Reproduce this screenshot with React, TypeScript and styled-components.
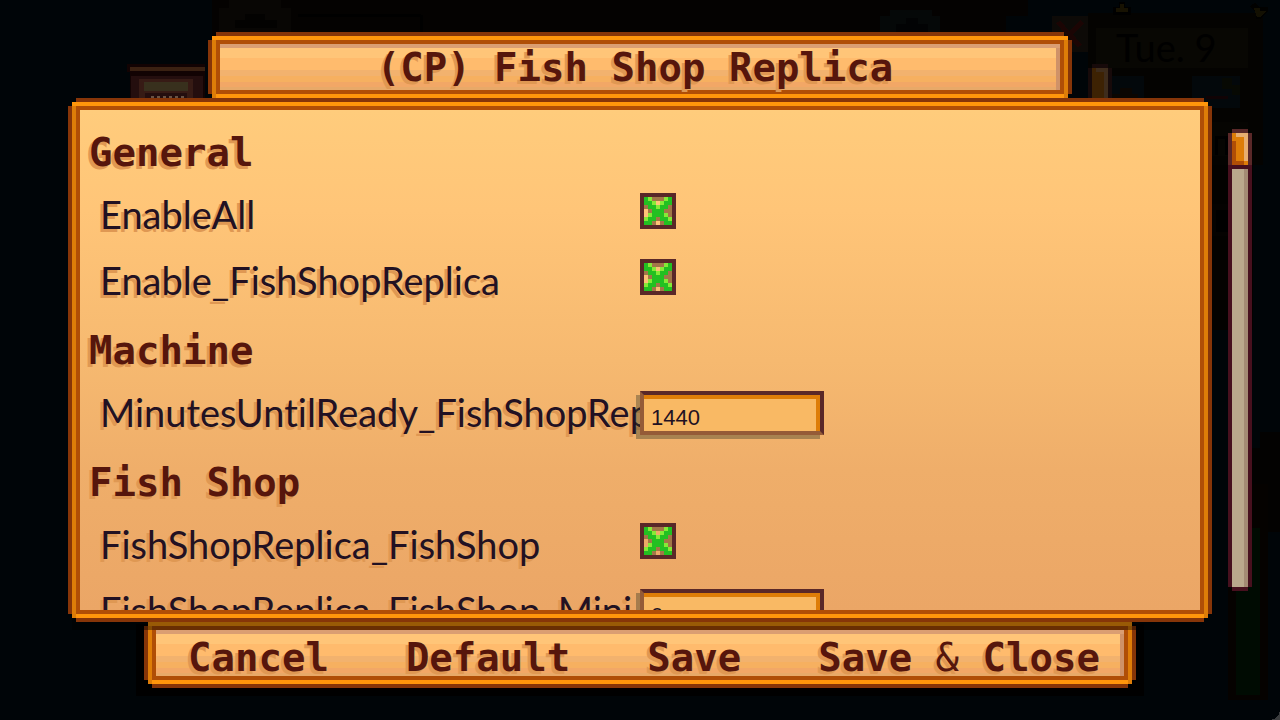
import React, { useState } from "react";
import styled, { createGlobalStyle, css } from "styled-components";

const GlobalStyle = createGlobalStyle`
  * { box-sizing: border-box; }
  body { margin: 0; background: #000508; }
`;

const headingText = css`
  font-family: "DejaVu Sans Mono", monospace;
  font-weight: 700;
  font-size: 39px;
  line-height: 48px;
  color: #56160c;
  text-shadow: -3px 3px 0 #df9853;
  white-space: nowrap;
`;

/* Pixel-art wooden frame: three 4px rings with notched corners. */
const frame = css`
  border: 4px solid #b04e06;
  box-shadow:
    0 -4px 0 #ff960b,
    0 4px 0 #ff960b,
    -4px 0 0 #de7d08,
    4px 0 0 #de7d08,
    -4px -4px 0 #ff960b,
    4px -4px 0 #ff960b,
    -4px 4px 0 #de7d08,
    4px 4px 0 #de7d08,
    0 -8px 0 #863508,
    0 8px 0 #863508,
    -8px 0 0 #863508,
    8px 0 0 #863508,
    -4px 16px 0 rgba(0, 0, 0, 0.4);
`;

const Screen = styled.div`
  position: relative;
  height: 100vh;
  min-height: 480px;
  overflow: hidden;
  display: flex;
  flex-direction: column;
  padding: 40px 0;
  gap: 12px;
`;

const Backdrop = styled.svg`
  position: absolute;
  inset: 0;
  width: 100%;
  height: 100%;
`;

const Plank = styled.div`
  ${frame}
  position: relative;
  height: 54px;
  flex: none;
  background:
    linear-gradient(#da9e72, #da9e72) top / 100% 4px no-repeat,
    linear-gradient(#cf9268, #cf9268) right / 4px 100% no-repeat,
    linear-gradient(#ffc578 14px, #ffbb6d 14px 26px, #f2b26e 26px 32px, #f6b060 32px 38px, #f2a766 38px 43px, #e8a968 43px);
`;

const TitleBar = styled(Plank).attrs({ as: "header" })`
  margin: 0 216px;
  padding-right: 10px;
  display: flex;
  justify-content: center;
`;

const Title = styled.h1`
  ${headingText}
  margin: 0;
`;

const Middle = styled.div`
  position: relative;
  z-index: 1;
  flex: 1;
  min-height: 0;
  display: flex;
  gap: 24px;
  padding: 0 28px 0 76px;
`;

const Panel = styled.main`
  ${frame}
  flex: 1;
  min-width: 0;
  overflow: hidden;
  padding: 17px 0 0;
  background: linear-gradient(#ffcc7c, #ffc578 20%, #f6b970 50%, #efae6a 72%, #eba666);
`;

const SectionHeading = styled.h2`
  ${headingText}
  height: 66px;
  margin: 0;
  padding-left: 9px;
  line-height: 52px;
`;

const Row = styled.div`
  display: grid;
  grid-template-columns: 1fr 1fr;
  height: 66px;
`;

const RowLabel = styled.label`
  min-width: 0;
  overflow: hidden;
  padding-left: 20px;
  font-family: Lato, sans-serif;
  font-size: 38px;
  font-variant-ligatures: none;
  line-height: 42px;
  color: #221122;
  text-shadow: -3px 3px 0 #df9853;
  white-space: nowrap;
`;

const CheckWrap = styled.span`
  display: grid;
  width: 36px;
  height: 36px;
  & > * { grid-area: 1 / 1; }
`;

const CheckInput = styled.input`
  width: 36px;
  height: 36px;
  margin: 0;
  opacity: 0;
  cursor: pointer;
`;

const TextInput = styled.input`
  position: relative;
  width: 184px;
  height: 44px;
  border: 4px solid;
  border-color: #5a2828 #5a2828 #955b37 #955b37;
  border-radius: 0;
  outline: none;
  padding: 10px 8px 0 7px;
  background:
    linear-gradient(#de7d08, #de7d08) top / 100% 4px no-repeat,
    linear-gradient(#de7d08, #de7d08) right / 4px 100% no-repeat,
    #f9b964;
  box-shadow: -4px 4px 0 rgba(60, 60, 40, 0.4);
  font-family: "Liberation Sans", sans-serif;
  font-size: 22px;
  line-height: 24px;
  color: #221122;
`;

const ScrollTrack = styled.div`
  width: 24px;
  margin: 23px 0;
  display: flex;
  flex-direction: column;
`;

const Thumb = styled.svg`
  display: block;
  flex: none;
`;

const Groove = styled.div`
  flex: 1;
  margin: 0 4px 4px;
  background: linear-gradient(90deg, #baa88c 12px, #a38a73 12px);
  box-shadow: -4px 0 0 #47101e, 4px 0 0 #47101e, 0 4px 0 #47101e;
`;

const Actions = styled(Plank).attrs({ as: "footer" })`
  margin: 0 152px;
  padding: 4px 24px 0 32px;
  display: flex;
  align-items: flex-start;
  justify-content: space-between;
`;

const ActionButton = styled.button`
  ${headingText}
  border: 0;
  padding: 0;
  background: none;
  cursor: pointer;
`;

const Thin = styled.span`
  font-weight: 400;
`;

const CHECK_ROWS = ["GLBBBLG", "GGLPLGG", "BGGLGGB", "PBGGGBB", "PLGGGLB", "LGGBGGL", "GGBPBGG"];
const CHECK_COLORS: Record<string, string> = { G: "#23c021", L: "#86ea37", B: "#a27748" };

function CheckArt({ on }: { on: boolean }) {
  return (
    <svg width="36" height="36" viewBox="0 0 9 9" shapeRendering="crispEdges" aria-hidden="true">
      <path d="M0 0h9v9H0zM1 1v7h7V1z" fill="#5a2828" fillRule="evenodd" />
      {on &&
        CHECK_ROWS.flatMap((row, y) =>
          row.split("").map((c, x) =>
            CHECK_COLORS[c] ? (
              <rect key={`${x}-${y}`} x={x + 1} y={y + 1} width="1" height="1" fill={CHECK_COLORS[c]} />
            ) : null
          )
        )}
    </svg>
  );
}

function CheckRow({ name }: { name: string }) {
  const [on, setOn] = useState(true);
  return (
    <Row>
      <RowLabel htmlFor={name}>{name}</RowLabel>
      <CheckWrap>
        <CheckArt on={on} />
        <CheckInput id={name} type="checkbox" checked={on} onChange={(e) => setOn(e.target.checked)} />
      </CheckWrap>
    </Row>
  );
}

function TextRow({ name, value }: { name: string; value: string }) {
  return (
    <Row>
      <RowLabel htmlFor={name}>{name}</RowLabel>
      <TextInput id={name} type="text" defaultValue={value} />
    </Row>
  );
}

function Scene() {
  return (
    <Backdrop viewBox="0 0 1280 720" preserveAspectRatio="xMidYMid slice" shapeRendering="crispEdges" aria-hidden="true">
      <path d="M212 0h816v16h-22v24H212z" fill="#040201" />
      <path d="M219 8h10V0h52v8h10v24h-72z" fill="#080604" />
      <path d="M235 28v-8h10v-6h20v6h12v8z" fill="#030201" />
      <path d="M298 15h123M421 15v17" stroke="#000" strokeWidth="3" />
      <path d="M880 32V16h10v-6h42v6h8v16z" fill="#050808" />
      <path d="M896 32v-8h10v-6h12v6h10v8z" fill="#020304" />
      <path d="M127 64h78v34h-75V72h-3z" fill="#120303" />
      <path d="M130 67h75v4h-75z" fill="#3a2112" />
      <path d="M131 76h72v22h-72z" fill="#240e0e" />
      <path d="M139 79h54v19h-54z" fill="#371b15" />
      <path d="M144 82h44v9h-44z" fill="#38301d" />
      <path d="M145 93h42v5h-42z" fill="#240e0e" />
      <path d="M151 97h36" stroke="#6a5345" strokeWidth="2" strokeDasharray="3 3" />
      <path d="M1088 13h175v152h-175z" fill="#040301" />
      <path d="M1096 28h152v40h-152z" fill="#080703" />
      <path d="M1104 76h40v32h-40zM1192 76h48v32h-48z" fill="#03080b" />
      <path d="M1112 94h8v-6h12v6h6v7h-26z" fill="#0b0602" />
      <path d="M1206 97h22" stroke="#100305" strokeWidth="3" />
      <path d="M1222 78h10v7h8v10h-8v-6h-10z" fill="#070903" />
      <path d="M1204 122h44v34h-44z" fill="#060502" />
      <path d="M1216 155v-18h10v18" fill="none" stroke="#000" strokeWidth="3" />
      <path d="M1088 165h165v165h-165z" fill="#030200" />
      <path d="M1212 204h28v32h-28zM1212 260h20v40h-20z" fill="#050301" />
      <path d="M1212 180h18M1216 210h12v22h-12z" fill="#000" />
      <path d="M1113 15V7h6V2h6v5h6v8z" fill="#000" />
      <path d="M1116 12V8h4V4h4v4h4v4z" fill="#171202" />
      <path d="M1250 6l5-3 5 4h8v4l-8 8h-4v-6z" fill="#010100" />
      <path d="M1254 8h6v3h6l-6 6h-3z" fill="#131002" />
      <path d="M1052 16h36v36h-36z" fill="#0d0a07" />
      <path d="M1058 22l22 24m2-24l-24 24" stroke="#1b0504" strokeWidth="5" />
      <path d="M1092 64h16v4h4v30h-24V68h4z" fill="#170a0a" />
      <path d="M1092 68h12v30h-12z" fill="#3d2203" />
      <path d="M1096 68h12v30h-4V72h-8z" fill="#3e2c1c" />
      <path d="M1248 448h12v-16h20v100h-32z" fill="#030201" />
      <path d="M1228 484h40v216h-40z" fill="#050200" />
      <path d="M1236 528h24v167h-24z" fill="#000b02" />
      <path d="M136 624h1008v72H136z" fill="#000" />
      <path d="M1280 708v12h-12q12 0 12-12" fill="#3a3c3d" />
      <text x="1116" y="62" fontFamily="Lato, sans-serif" fontSize="38" fill="#000">Tue. 9</text>
    </Backdrop>
  );
}

export default function App() {
  return (
    <>
      <GlobalStyle />
      <Screen>
        <Scene />
        <TitleBar>
          <Title>(CP) Fish Shop Replica</Title>
        </TitleBar>
        <Middle>
          <Panel id="options">
            <SectionHeading>General</SectionHeading>
            <CheckRow name="EnableAll" />
            <CheckRow name="Enable_FishShopReplica" />
            <SectionHeading>Machine</SectionHeading>
            <TextRow name="MinutesUntilReady_FishShopReplica" value="1440" />
            <SectionHeading>Fish Shop</SectionHeading>
            <CheckRow name="FishShopReplica_FishShop" />
            <TextRow name="FishShopReplica_FishShop_Mini" value="0" />
          </Panel>
          <ScrollTrack role="scrollbar" aria-orientation="vertical" aria-valuenow={0} aria-controls="options">
            <Thumb width="24" height="40" viewBox="0 0 6 10" shapeRendering="crispEdges" aria-hidden="true">
              <path d="M1 0h4v1h1v8H0V1h1z" fill="#5a2828" />
              <path d="M0 9h6v1H0z" fill="#47101e" />
              <path d="M1 1h4v8H1z" fill="#de7d08" />
              <path d="M2 1h3v7H4V2H2z" fill="#e8ae70" />
              <path d="M1 3h1v5h2v1H1z" fill="#b04e06" />
            </Thumb>
            <Groove />
          </ScrollTrack>
        </Middle>
        <Actions>
          <ActionButton type="button">Cancel</ActionButton>
          <ActionButton type="button">Default</ActionButton>
          <ActionButton type="button">Save</ActionButton>
          <ActionButton type="button">
            Save <Thin>&amp;</Thin> Close
          </ActionButton>
        </Actions>
      </Screen>
    </>
  );
}
